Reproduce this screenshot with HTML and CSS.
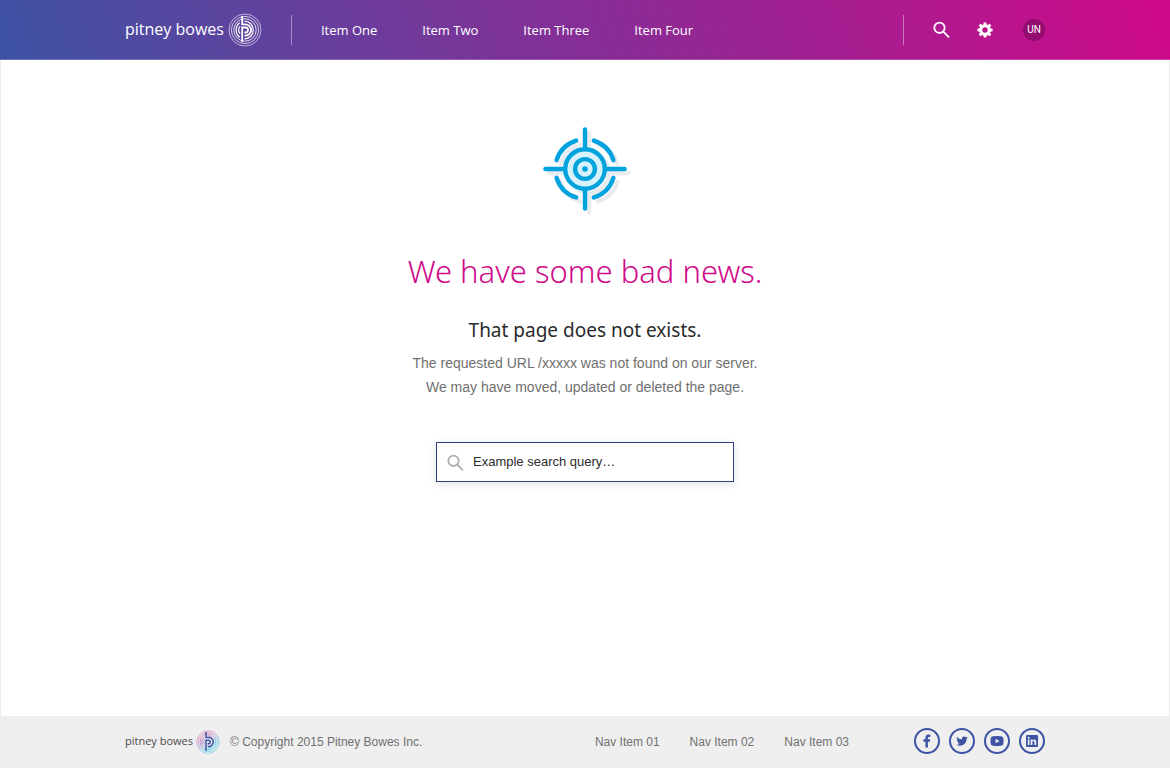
FILE: index.html
```html
<!DOCTYPE html>
<html lang="en">
<head>
<meta charset="utf-8">
<meta name="viewport" content="width=device-width, initial-scale=1">
<title>Page not found</title>
<link rel="stylesheet" href="styles.css">
</head>
<body>
<header class="site-header">
  <div class="container header-row">
    <a class="brand" href="#">
      <span class="brand-name">pitney bowes</span>
      <svg class="brand-mark" viewBox="-17 -17 34 34" aria-hidden="true">
        <g fill="none" stroke="currentColor">
          <g stroke-width="1">
            <circle r="16" opacity=".6"/><circle r="13.6" opacity=".7"/><circle r="11.2" opacity=".8"/>
          </g>
          <path stroke-width="1.2" d="M-5.2 -7.2A8.9 8.9 0 0 0 -5.2 7.2M-0.5 -8.8A8.8 8.8 0 0 1 -0.5 8.8M-5 -3.6A6 6 0 0 0 -5 3.6"/>
          <path stroke-width="1.8" d="M-2.8 -14V-5.6H0.5A5.6 5.6 0 0 1 0.5 5.6H-0.5M-2.8 12V-2.5H0.5A2.5 2.5 0 0 1 0.5 2.5H-0.5"/>
        </g>
      </svg>
    </a>
    <nav class="main-nav" aria-label="Main">
      <a href="#">Item One</a>
      <a href="#">Item Two</a>
      <a href="#">Item Three</a>
      <a href="#">Item Four</a>
    </nav>
    <div class="tools">
      <button class="icon-button" type="button" aria-label="Search">
        <svg class="icon-search" viewBox="0 0 17 17" aria-hidden="true"><g fill="none" stroke="currentColor" stroke-width="1.8"><circle cx="6.5" cy="6.8" r="5.2"/><path d="M10.3 10.6l5.7 5.7"/></g></svg>
      </button>
      <button class="icon-button" type="button" aria-label="Settings">
        <svg class="icon-gear" viewBox="-8 -8 16 16" aria-hidden="true">
          <g fill="currentColor">
            <path fill-rule="evenodd" d="M0 -5.8A5.8 5.8 0 1 1 0 5.8A5.8 5.8 0 1 1 0 -5.8ZM0 -2.7A2.7 2.7 0 1 0 0 2.7A2.7 2.7 0 1 0 0 -2.7Z"/>
            <path id="tooth" d="M-1.7 -5L-1.3 -7.6H1.3L1.7 -5ZM-1.7 5L-1.3 7.6H1.3L1.7 5ZM-5 -1.7L-7.6 -1.3V1.3L-5 1.7ZM5 -1.7L7.6 -1.3V1.3L5 1.7Z"/>
            <use href="#tooth" transform="rotate(45)"/>
          </g>
        </svg>
      </button>
      <button class="avatar" type="button">UN</button>
    </div>
  </div>
</header>

<main class="page">
  <svg class="target" viewBox="-42 -42 88 88" aria-hidden="true">
    <defs>
      <g id="crosshair" fill="none" stroke-width="4.4" stroke-linecap="round">
        <circle r="19.8"/>
        <path d="M0 -39.6V-22M0 39.6V22M-39.6 0H-22M39.6 0H22"/>
        <path d="M-8.8 -28.4A29.7 29.7 0 0 0 -28.4 -8.8M8.8 -28.4A29.7 29.7 0 0 1 28.4 -8.8M-8.8 28.4A29.7 29.7 0 0 1 -28.4 8.8M8.8 28.4A29.7 29.7 0 0 0 28.4 8.8"/>
      </g>
    </defs>
    <use href="#crosshair" x="4" y="4" stroke="#e9ebf0"/>
    <circle r="19.8" fill="#d7f1fb"/>
    <use href="#crosshair" stroke="#00a3dd"/>
    <circle r="9.9" fill="#d7f1fb" stroke="#00a3dd" stroke-width="4.4"/>
    <circle r="2.8" fill="#00a3dd"/>
  </svg>
  <h1 class="title">We have some bad news.</h1>
  <h2 class="subtitle">That page does not exists.</h2>
  <p class="message">The requested URL /xxxxx was not found on our server.<br>We may have moved, updated or deleted the page.</p>
  <form class="search">
    <svg class="icon-search" viewBox="0 0 17 17" aria-hidden="true"><g fill="none" stroke="currentColor" stroke-width="1.8"><circle cx="6.5" cy="6.8" r="5.2"/><path d="M10.3 10.6l5.7 5.7"/></g></svg>
    <input class="search-input" type="text" aria-label="Search" value="Example search query…">
  </form>
</main>

<footer class="site-footer">
  <div class="container footer-row">
    <a class="brand brand-small" href="#">
      <span class="brand-name">pitney bowes</span>
      <svg class="brand-mark" viewBox="-17 -17 34 34" aria-hidden="true">
        <defs>
          <linearGradient id="rings" gradientUnits="userSpaceOnUse" x1="-8" y1="-12" x2="8" y2="12">
            <stop offset="0.2" stop-color="#cf6fb4"/><stop offset="0.5" stop-color="#8d8fd0"/><stop offset="0.7" stop-color="#45c5ea"/>
          </linearGradient>
        </defs>
        <g fill="none" stroke="url(#rings)">
          <g stroke-width="1.1">
            <circle r="16" opacity=".7"/><circle r="13.6" opacity=".8"/><circle r="11.2"/>
          </g>
          <path stroke-width="1.3" d="M-5.2 -7.2A8.9 8.9 0 0 0 -5.2 7.2M-0.5 -8.8A8.8 8.8 0 0 1 -0.5 8.8M-5 -3.6A6 6 0 0 0 -5 3.6"/>
          <path stroke="#3e53a4" stroke-width="2.2" d="M-2.8 -14V-6.4H0.8A6.4 6.4 0 0 1 0.8 6.4H-0.5M-2.8 12.5V-2.6H0.5A2.6 2.6 0 0 1 0.5 2.6H-0.5"/>
        </g>
      </svg>
    </a>
    <small class="copyright">© Copyright 2015 Pitney Bowes Inc.</small>
    <nav class="footer-nav" aria-label="Footer">
      <a href="#">Nav Item 01</a>
      <a href="#">Nav Item 02</a>
      <a href="#">Nav Item 03</a>
    </nav>
    <div class="social">
      <a href="#" aria-label="Facebook"><svg viewBox="0 0 14 14" aria-hidden="true"><path fill="currentColor" d="M5.4 13.5V7.7H3.4V5.3H5.4V3.7C5.4 1.7 6.6.6 8.4.6H10.3V2.9H9.1C8.2 2.9 7.9 3.3 7.9 4V5.3H10.2L9.9 7.7H7.9V13.5Z"/></svg></a>
      <a href="#" aria-label="Twitter"><svg viewBox="0 0 24 24" aria-hidden="true"><path fill="currentColor" transform="translate(2.2 2.4) scale(.82)" d="M24 4.6a10 10 0 0 1-2.8.8 5 5 0 0 0 2.1-2.7 10 10 0 0 1-3.1 1.2 4.9 4.9 0 0 0-8.4 4.5A14 14 0 0 1 1.7 3.2a4.9 4.9 0 0 0 1.5 6.5 4.9 4.9 0 0 1-2.2-.6v.1a4.9 4.9 0 0 0 3.9 4.8 5 5 0 0 1-2.2.1 4.9 4.9 0 0 0 4.6 3.4A9.9 9.9 0 0 1 0 19.5a14 14 0 0 0 7.5 2.2c9.1 0 14-7.5 14-14v-.6A10 10 0 0 0 24 4.6Z"/></svg></a>
      <a href="#" aria-label="YouTube"><svg viewBox="0 0 14 14" aria-hidden="true"><path fill="currentColor" fill-rule="evenodd" d="M3 2.3Q7 1.9 11 2.3Q13.3 2.5 13.4 4.8Q13.6 7 13.4 9.2Q13.3 11.5 11 11.7Q7 12.1 3 11.7Q.7 11.5.6 9.2Q.4 7 .6 4.8Q.7 2.5 3 2.3ZM5.6 4.7V9.3L9.5 7Z"/></svg></a>
      <a href="#" aria-label="LinkedIn"><svg viewBox="0 0 14 14" aria-hidden="true"><path fill="currentColor" fill-rule="evenodd" d="M2.2 1H11.8Q13 1 13 2.2V11.8Q13 13 11.8 13H2.2Q1 13 1 11.8V2.2Q1 1 2.2 1ZM2.8 5.6V11H4.5V5.6ZM2.7 3.8A1 1 0 1 0 4.7 3.8A1 1 0 1 0 2.7 3.8ZM5.7 5.6V11H7.4V8.2C7.4 6.7 9.4 6.7 9.4 8.2V11H11.2V7.8C11.2 5.3 8.5 4.8 7.4 6.4V5.6Z"/></svg></a>
    </div>
  </div>
</footer>
</body>
</html>
```
FILE: styles.css
```css
* { box-sizing: border-box; }

body {
  margin: 0;
  min-height: 100vh;
  display: flex;
  flex-direction: column;
  background: #fff;
  color: #6f6f6f;
  font-family: "Liberation Sans", Arial, sans-serif;
}

a { color: inherit; text-decoration: none; }
svg { display: block; flex: none; }

button {
  padding: 0;
  border: 0;
  background: none;
  color: inherit;
  cursor: pointer;
}

.container {
  width: 100%;
  max-width: 968px;
  margin: 0 auto;
  padding: 0 24px;
  display: flex;
  align-items: center;
}

/* Header */
.site-header {
  background: linear-gradient(70deg, #3e53a4 0%, #cf0989 100%);
  border-bottom: 1px solid rgba(255, 255, 255, 0.2);
  color: #fff;
}

.header-row { min-height: 59px; }

.brand {
  display: flex;
  align-items: center;
  gap: 4px;
  white-space: nowrap;
}

.brand-name {
  padding-bottom: 2px;
  font: 400 16px/24px "Open Sans", sans-serif;
}

.brand-mark { width: 34px; height: 34px; }

.main-nav {
  display: flex;
  align-items: center;
  gap: 45px;
  height: 30px;
  margin-left: 29px;
  padding-left: 29px;
  border-left: 1px solid rgba(255, 255, 255, 0.4);
  font: 500 13px/20px "Open Sans", sans-serif;
  white-space: nowrap;
}

.tools {
  display: flex;
  align-items: center;
  height: 30px;
  margin-left: auto;
  padding-left: 29px;
  border-left: 1px solid rgba(255, 255, 255, 0.4);
}

.icon-search { width: 17px; height: 17px; }
.icon-gear { width: 16px; height: 16px; }
.icon-button + .icon-button { margin-left: 27px; }

.avatar {
  width: 22px;
  height: 22px;
  margin-left: 30px;
  border-radius: 50%;
  background: #930c6f;
  font: 400 10px/22px Roboto, sans-serif;
}

/* Message */
.page {
  flex: 1;
  display: flex;
  flex-direction: column;
  align-items: center;
  padding: 67px 24px 48px;
  border: solid #ececec;
  border-width: 0 1px;
  text-align: center;
}

.target { width: 88px; height: 88px; margin-left: 4px; }

.title {
  margin: 32px 0 0;
  color: #cf0989;
  font: 300 31px/48px "Noto Sans", sans-serif;
}

.subtitle {
  margin: 20px 0 0;
  color: #2b2b2b;
  font: 400 19px/30px "Noto Sans", sans-serif;
}

.message {
  margin: 6px 0 0;
  font-size: 14px;
  line-height: 24px;
}

.search {
  display: flex;
  align-items: center;
  gap: 9px;
  width: 100%;
  max-width: 298px;
  height: 40px;
  margin: 43px 0 0;
  padding: 0 10px;
  border: 1px solid #2e4088;
  background: #fff;
  box-shadow: 0 2px 8px rgba(0, 0, 0, 0.12);
  color: #adadad;
}

.search-input {
  flex: 1;
  min-width: 0;
  padding: 0;
  border: 0;
  outline: 0;
  background: none;
  color: #2b2b2b;
  font: 13px/20px "Liberation Sans", Arial, sans-serif;
}

/* Footer */
.site-footer {
  background: #efefef;
  font-size: 12px;
  line-height: 16px;
}

.footer-row { min-height: 52px; }
.brand-small { gap: 3px; color: #4a4a4a; }
.brand-small .brand-name { font-size: 11px; line-height: 16px; }
.brand-small .brand-mark { width: 24px; height: 24px; }

.copyright {
  margin-left: 10px;
  font-size: 12px;
  white-space: nowrap;
}

.footer-nav {
  display: flex;
  gap: 30px;
  margin-left: auto;
  white-space: nowrap;
}

.social {
  display: flex;
  gap: 9px;
  margin-left: 65px;
  padding-bottom: 2px;
  color: #3e53a4;
}

.social a {
  display: grid;
  place-items: center;
  width: 26px;
  height: 26px;
  border: 2px solid;
  border-radius: 50%;
}

.social svg { width: 14px; height: 14px; }
```
